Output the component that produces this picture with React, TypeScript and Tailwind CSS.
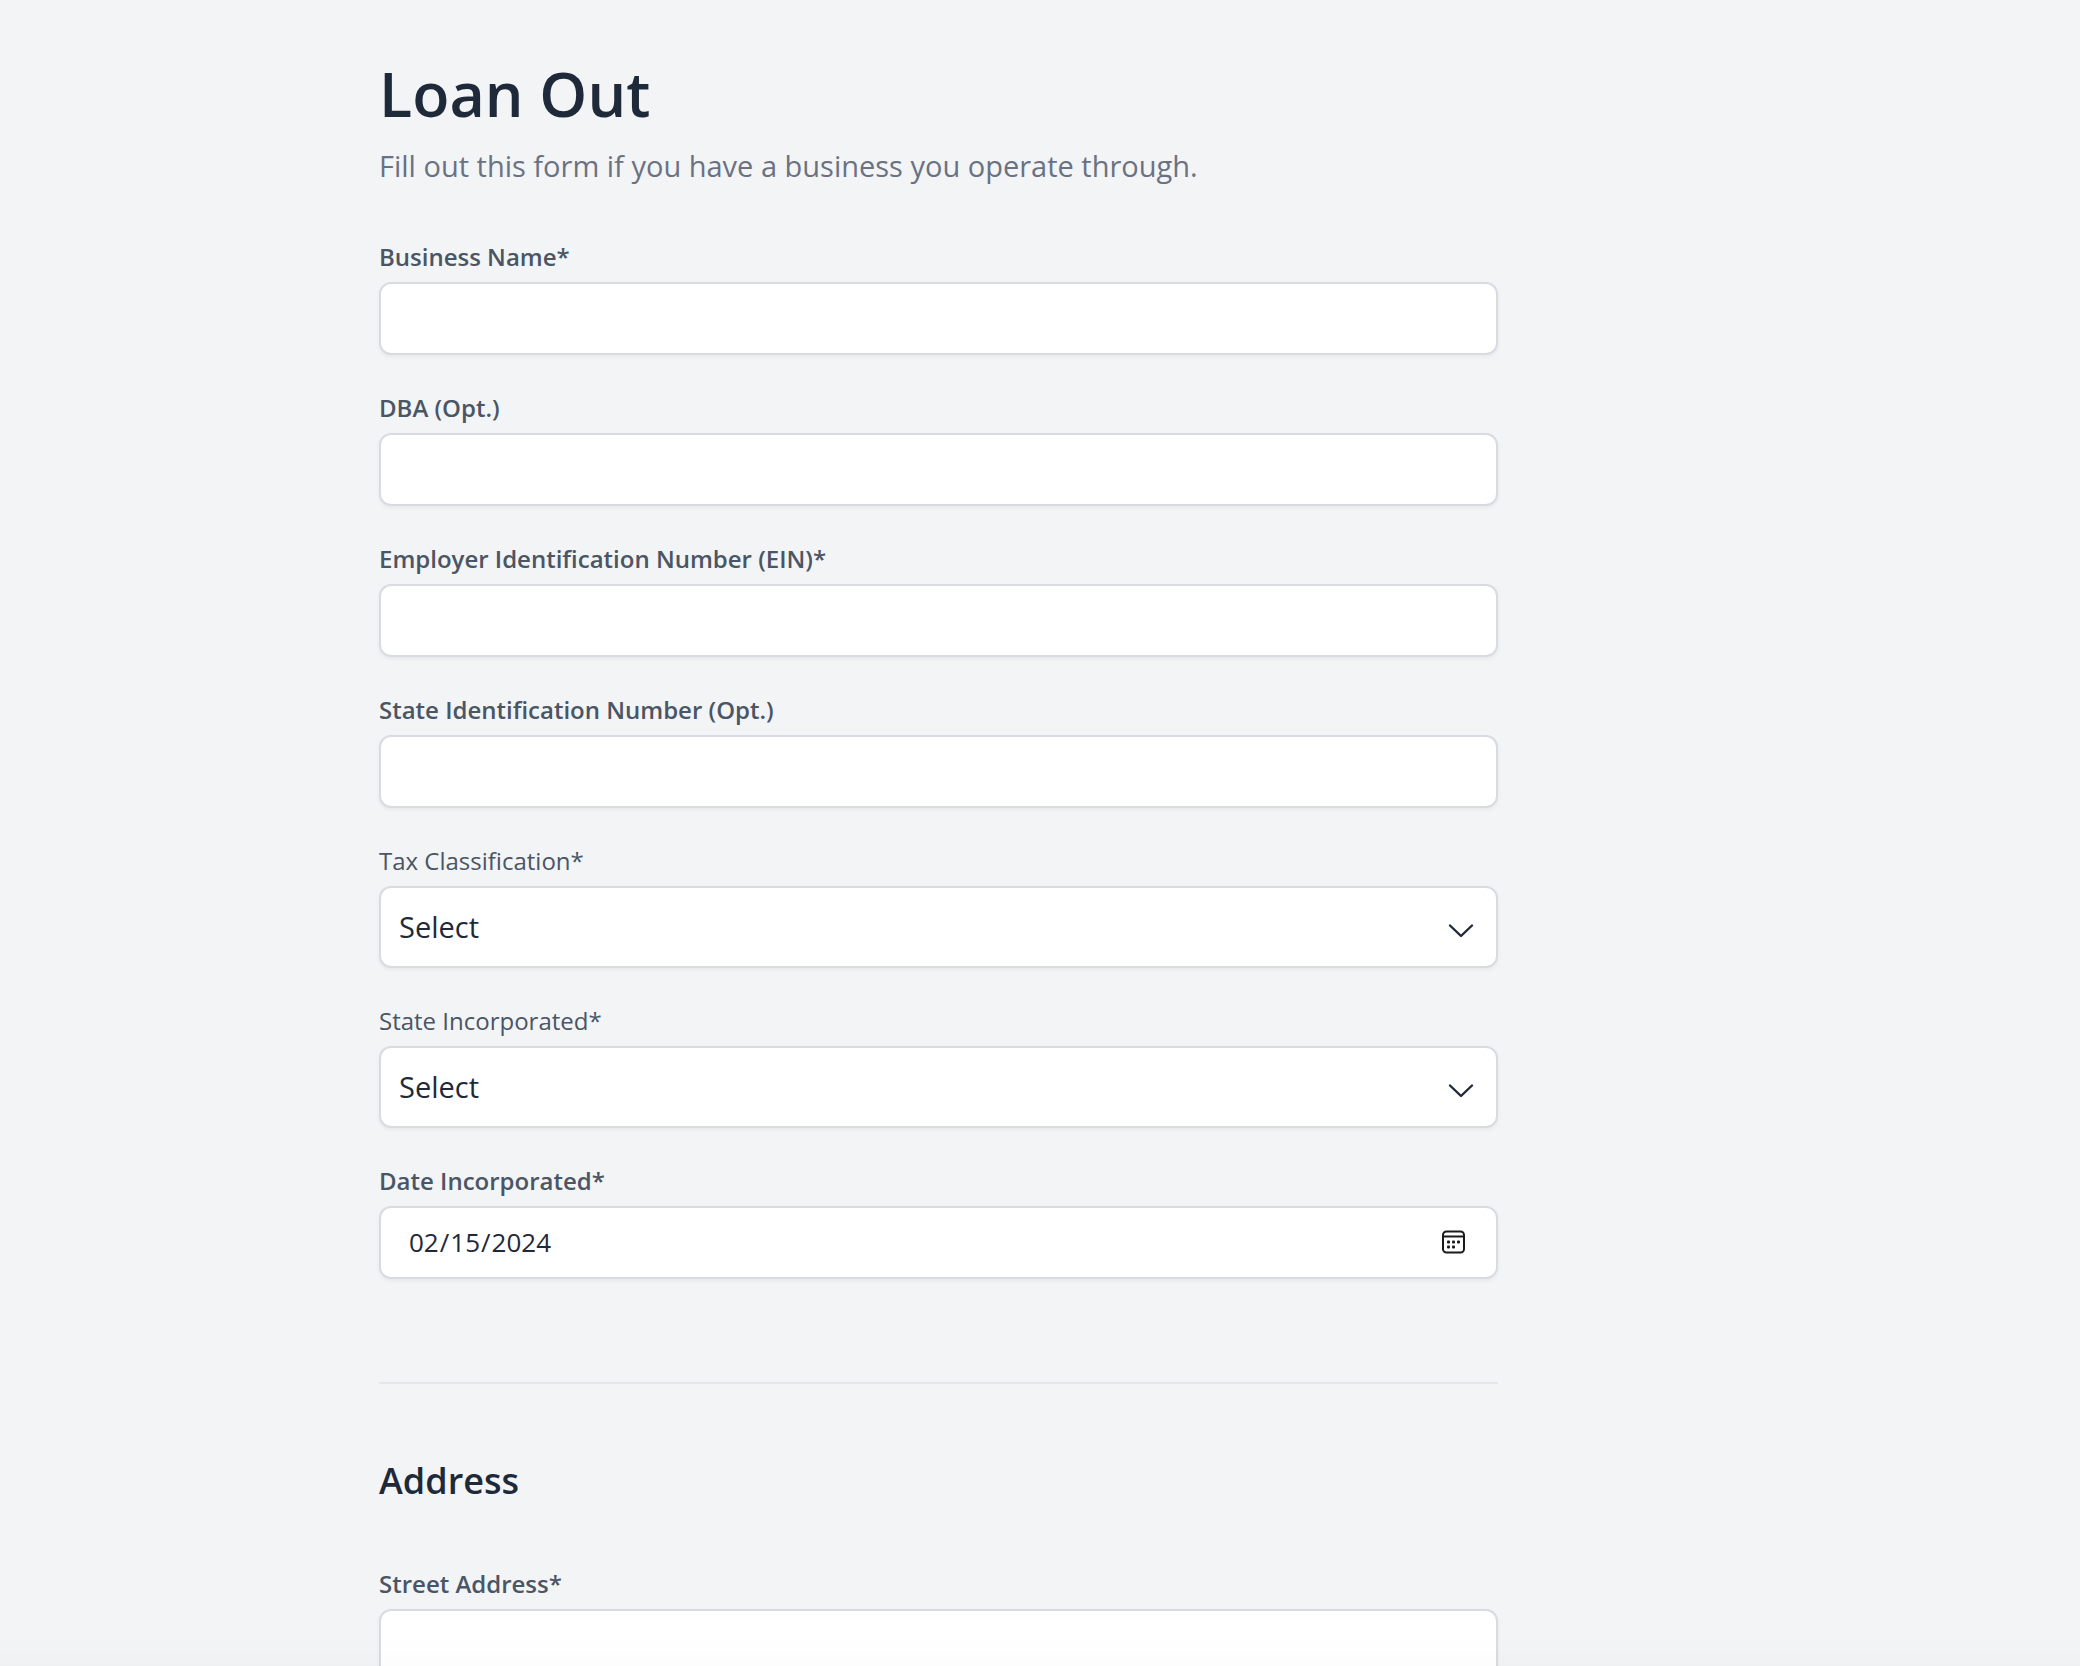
import { useState } from 'react';
import type { ReactNode } from 'react';

const boxClass =
  'block w-full rounded-xl border-2 border-[#d8dbe1] bg-white text-gray-800 shadow-[0_2px_4px_rgba(0,0,0,0.05)] outline-none focus:border-indigo-500';

const taxOptions = ['C Corporation', 'S Corporation', 'Partnership', 'LLC'];
const stateOptions = ['California', 'Georgia', 'New Mexico', 'New York'];

function Field({ id, label, light, children }: { id: string; label: string; light?: boolean; children: ReactNode }) {
  return (
    <div>
      <label
        htmlFor={id}
        className={`mb-[9px] block text-2xl/8 text-gray-600 ${light ? 'font-normal' : 'font-semibold'}`}
      >
        {label}
      </label>
      {children}
    </div>
  );
}

function TextField({ id, label }: { id: string; label: string }) {
  return (
    <Field id={id} label={label}>
      <input id={id} name={id} type="text" className={`${boxClass} h-[73px] px-7 text-[26px]`} />
    </Field>
  );
}

function SelectField({ id, label, options }: { id: string; label: string; options: string[] }) {
  return (
    <Field id={id} label={label} light>
      <div className="relative">
        <select id={id} name={id} className={`${boxClass} h-[82px] appearance-none px-[18px] text-[29px]`}>
          <option value="">Select</option>
          {options.map((option) => (
            <option key={option} value={option}>
              {option}
            </option>
          ))}
        </select>
        <svg
          className="pointer-events-none absolute top-7 right-5 h-8 w-8 text-gray-800"
          viewBox="0 0 32 32"
          fill="none"
          stroke="currentColor"
          strokeWidth="2.4"
          strokeLinecap="round"
          strokeLinejoin="round"
        >
          <path d="M4 11.5 15 22 26 11.5" />
        </svg>
      </div>
    </Field>
  );
}

function DateField({ id, label }: { id: string; label: string }) {
  const [value, setValue] = useState('2024-02-15');

  return (
    <Field id={id} label={label}>
      <div className="relative">
        <input
          id={id}
          name={id}
          type="date"
          value={value}
          onChange={(e) => setValue(e.target.value)}
          className={`${boxClass} h-[73px] px-[27px] text-[26px] [&::-webkit-calendar-picker-indicator]:opacity-0`}
        />
        <svg
          className="pointer-events-none absolute top-6 right-8 h-6 w-6 text-[#1a1a1a]"
          viewBox="1 0 24 24"
          fill="none"
          stroke="currentColor"
          strokeWidth="2"
        >
          <rect x="2" y="1.5" width="21" height="21" rx="3.5" />
          <path d="M2 6.5h21" />
          <g fill="currentColor" stroke="none">
            <rect x="6" y="10.5" width="3" height="3" rx="1" />
            <rect x="11" y="10.5" width="3" height="3" rx="1" />
            <rect x="16" y="10.5" width="3" height="3" rx="1" />
            <rect x="6" y="15.5" width="3" height="3" rx="1" />
            <rect x="11" y="15.5" width="3" height="3" rx="1" />
          </g>
        </svg>
      </div>
    </Field>
  );
}

export default function App() {
  return (
    <div className="h-screen overflow-hidden bg-gray-100 font-['Open_Sans','Noto_Sans',sans-serif]">
      <form className="ml-[379px] w-full max-w-[1119px] pt-[62px]">
        <h1 className="text-[61px] leading-[64px] font-semibold text-gray-800">Loan Out</h1>
        <p className="mt-5 text-[29px] leading-10 text-gray-500">
          Fill out this form if you have a business you operate through.
        </p>

        <div className="mt-[55px] flex flex-col gap-[37px]">
          <TextField id="businessName" label="Business Name*" />
          <TextField id="dba" label="DBA (Opt.)" />
          <TextField id="ein" label="Employer Identification Number (EIN)*" />
          <TextField id="stateId" label="State Identification Number (Opt.)" />
          <SelectField id="taxClassification" label="Tax Classification*" options={taxOptions} />
          <SelectField id="stateIncorporated" label="State Incorporated*" options={stateOptions} />
          <DateField id="dateIncorporated" label="Date Incorporated*" />
        </div>

        <hr className="mt-[103px] border-t-2 border-gray-200" />

        <h2 className="mt-[73px] text-4xl/12 font-semibold text-gray-800">Address</h2>
        <div className="mt-[63px]">
          <TextField id="street" label="Street Address*" />
        </div>
      </form>
      <div className="pointer-events-none fixed inset-x-0 bottom-0 h-8 bg-linear-to-b from-transparent to-black/1" />
    </div>
  );
}
